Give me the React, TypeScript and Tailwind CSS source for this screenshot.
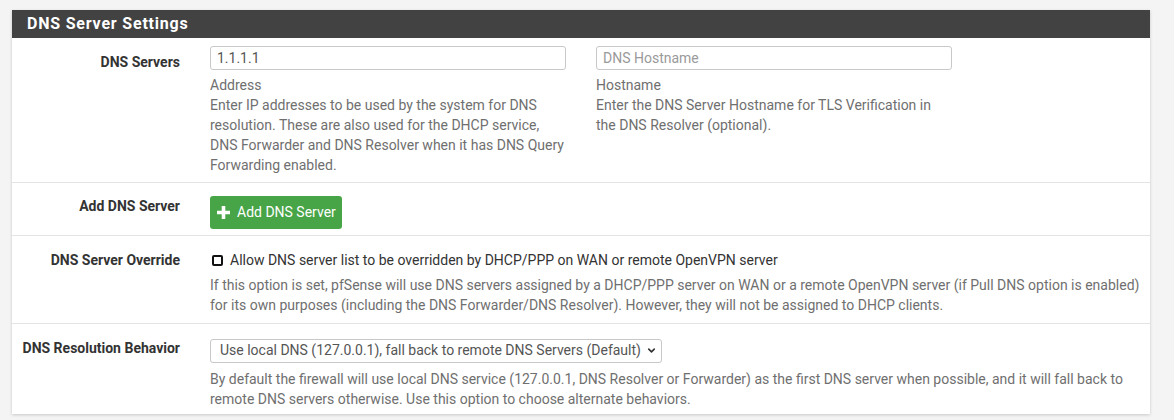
import { ChevronDown } from "lucide-react";

const font = { fontFamily: "Roboto, 'Liberation Sans', sans-serif" };

function Label({ text }: { text: string }) {
  return (
    <div className="w-[168px] shrink-0 text-right text-[14px] font-bold leading-5 text-[#333]">
      {text}
    </div>
  );
}

function Row({ children, last }: { children: React.ReactNode; last?: boolean }) {
  return (
    <div className={"flex gap-[30px] " + (last ? "" : "border-b border-[#e3e3e3]")}>{children}</div>
  );
}

export default function App() {
  return (
    <div className="min-h-[420px] bg-[#f4f4f4] pt-[10px] pl-[12px] pr-[24px]" style={font}>
      <div className="w-[1138px] bg-white shadow-[0_1px_3px_rgba(0,0,0,0.18)]">
        <div className="flex h-[28px] items-center bg-[#424242] pl-[15px]">
          <h2 className="text-[16px] font-bold tracking-[0.8px] text-white">DNS Server Settings</h2>
        </div>

        {/* DNS servers */}
        <Row>
          <div className="pt-[14px]">
            <Label text="DNS Servers" />
          </div>
          <div className="flex gap-[30px] pt-[8px] pb-[7px]">
            <div className="w-[356px]">
              <input
                defaultValue="1.1.1.1"
                className="h-[24px] w-full rounded-[3px] border border-[#c8c8c8] px-[6px] text-[14px] text-[#555] outline-none"
              />
              <div className="mt-[5px] text-[14px] leading-5 text-[#6f6f6f]">
                <div>Address</div>
                <div>
                  Enter IP addresses to be used by the system for DNS resolution. These are also used for the
                  DHCP service, DNS Forwarder and DNS Resolver when it has DNS Query Forwarding enabled.
                </div>
              </div>
            </div>
            <div className="w-[356px]">
              <input
                placeholder="DNS Hostname"
                className="h-[24px] w-full rounded-[3px] border border-[#c8c8c8] px-[6px] text-[14px] text-[#555] outline-none placeholder:text-[#9a9a9a]"
              />
              <div className="mt-[5px] text-[14px] leading-5 text-[#6f6f6f]">
                <div>Hostname</div>
                <div>Enter the DNS Server Hostname for TLS Verification in the DNS Resolver (optional).</div>
              </div>
            </div>
          </div>
        </Row>

        {/* add server */}
        <Row>
          <div className="pt-[13px]">
            <Label text="Add DNS Server" />
          </div>
          <div className="pt-[13px] pb-[6px]">
            <button className="flex h-[33px] items-center gap-[6px] rounded-[3px] bg-[#47a447] pl-[6px] pr-[6px] text-[14px] text-white">
              <svg width="15" height="15" viewBox="0 0 15 15">
                <path d="M7.5 1v13M1 7.5h13" stroke="white" strokeWidth="3.6" />
              </svg>
              Add DNS Server
            </button>
          </div>
        </Row>

        {/* override */}
        <Row>
          <div className="pt-[14px]">
            <Label text="DNS Server Override" />
          </div>
          <div className="w-[930px] pt-[14px] pb-[8px]">
            <label className="flex items-center gap-[7px] text-[14px] leading-5 text-[#333]">
              <input
                type="checkbox"
                className="ml-[2px] h-[11px] w-[11px] appearance-none rounded-[2px] border-2 border-[#111]"
              />
              Allow DNS server list to be overridden by DHCP/PPP on WAN or remote OpenVPN server
            </label>
            <div className="mt-[5px] text-[14px] leading-5 text-[#6f6f6f]">
              If this option is set, pfSense will use DNS servers assigned by a DHCP/PPP server on WAN or a
              remote OpenVPN server (if Pull DNS option is enabled) for its own purposes (including the DNS
              Forwarder/DNS Resolver). However, they will not be assigned to DHCP clients.
            </div>
          </div>
        </Row>

        {/* resolution behavior */}
        <Row last>
          <div className="pt-[14px]">
            <Label text="DNS Resolution Behavior" />
          </div>
          <div className="w-[930px] pt-[14px] pb-[5px]">
            <div className="relative w-[452px]">
              <select className="h-[24px] w-full appearance-none overflow-hidden rounded-[3px] border border-[#c8c8c8] pl-[9px] pr-[20px] text-[14px] text-[#555] outline-none">
                <option>Use local DNS (127.0.0.1), fall back to remote DNS Servers (Default)</option>
              </select>
              <ChevronDown
                className="pointer-events-none absolute right-[5px] top-[7px] text-[#333]"
                size={11}
                strokeWidth={3.5}
              />
            </div>
            <div className="mt-[6px] text-[14px] leading-5 text-[#6f6f6f]">
              By default the firewall will use local DNS service (127.0.0.1, DNS Resolver or Forwarder) as the
              first DNS server when possible, and it will fall back to remote DNS servers otherwise. Use this
              option to choose alternate behaviors.
            </div>
          </div>
        </Row>
      </div>
    </div>
  );
}
